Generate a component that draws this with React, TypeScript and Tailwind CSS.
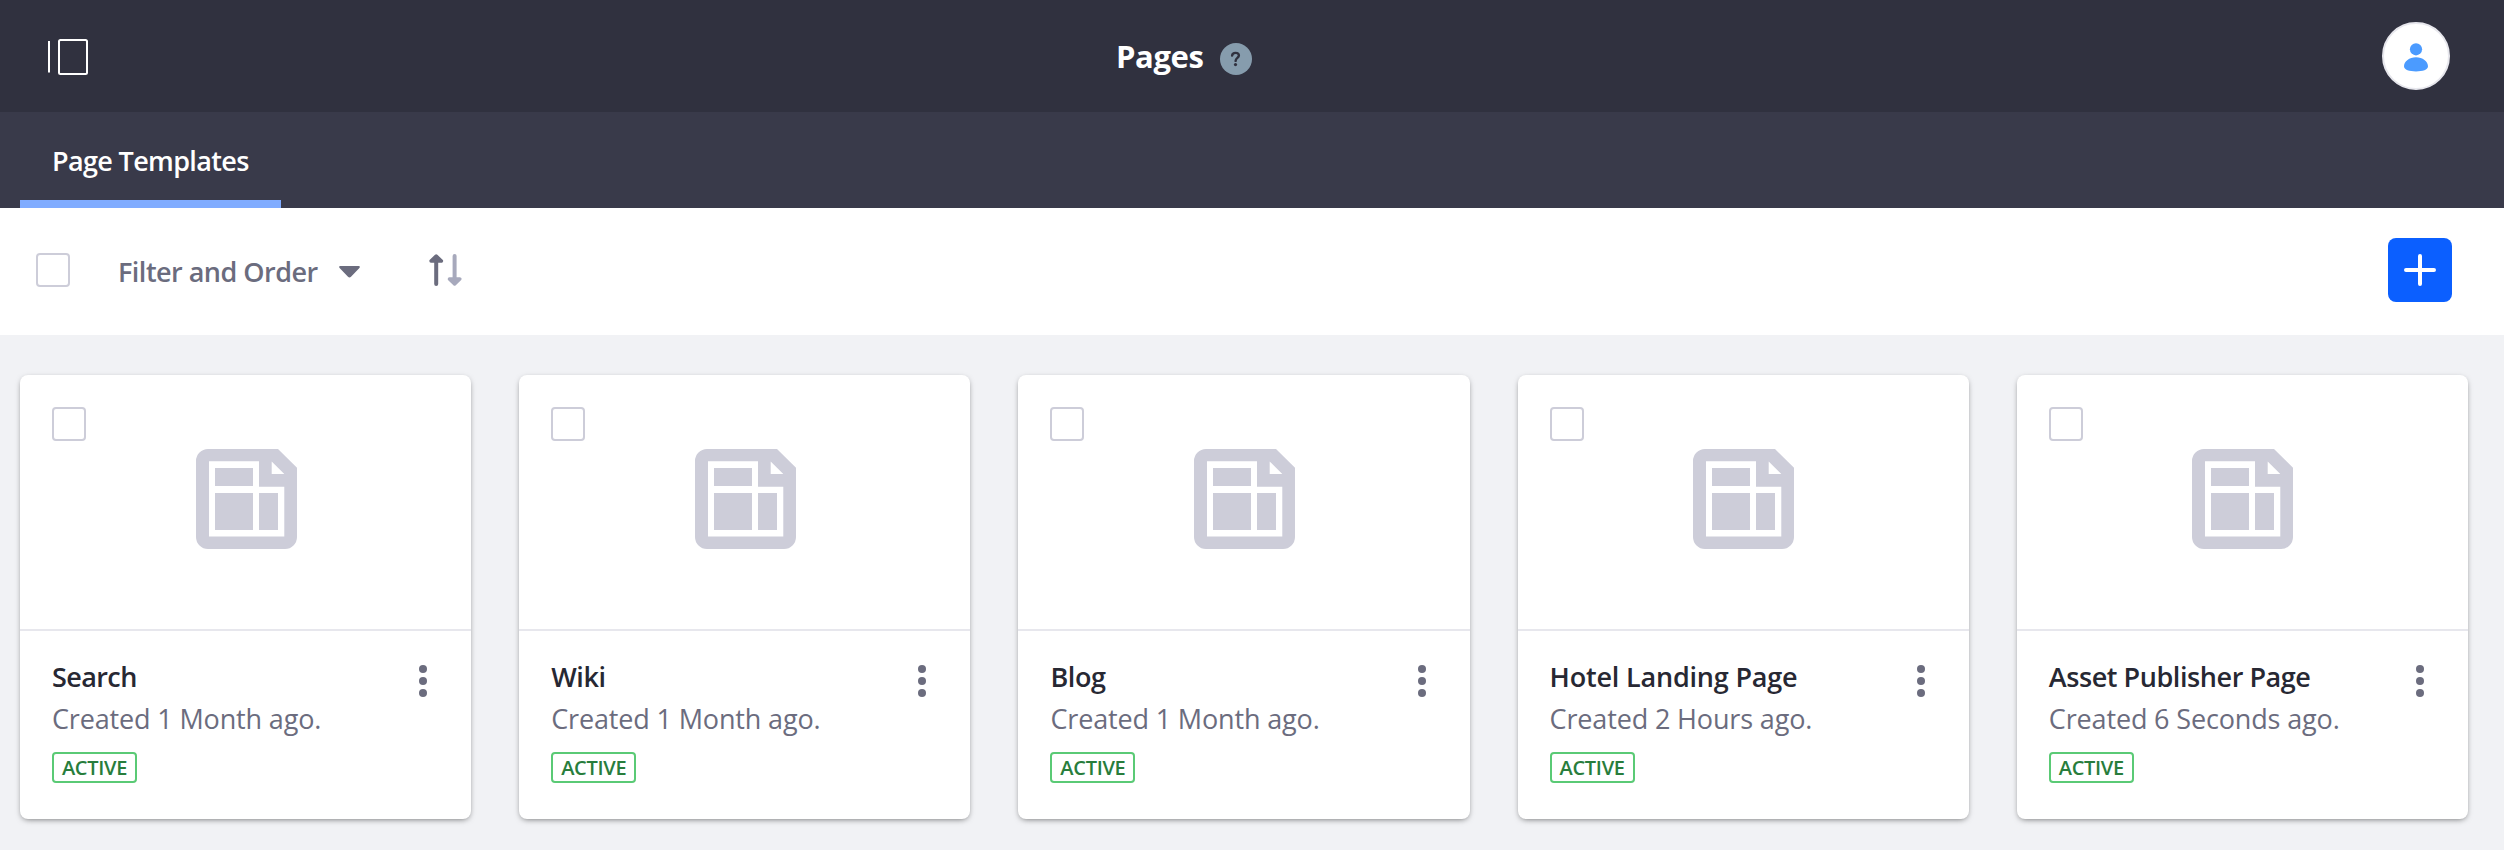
type Template = { title: string; created: string; titleTracking: string };

const templates: Template[] = [
  { title: "Search", created: "Created 1 Month ago.", titleTracking: "tracking-[-0.6px]" },
  { title: "Wiki", created: "Created 1 Month ago.", titleTracking: "tracking-[-0.4px]" },
  { title: "Blog", created: "Created 1 Month ago.", titleTracking: "tracking-[-0.4px]" },
  { title: "Hotel Landing Page", created: "Created 2 Hours ago.", titleTracking: "tracking-[-0.19px]" },
  { title: "Asset Publisher Page", created: "Created 6 Seconds ago.", titleTracking: "tracking-[-0.43px]" },
];

function Checkbox() {
  return <span className="block size-[34px] shrink-0 rounded border-2 border-[#cdcdd9] bg-white" />;
}

function PanelIcon() {
  return (
    <svg width="40" height="36" viewBox="0 0 40 36" fill="none" stroke="#fff" strokeWidth="2">
      <path d="M1 2v31.5" />
      <rect x="11" y="1" width="28" height="34" rx="1.5" />
    </svg>
  );
}

function HelpIcon() {
  return (
    <svg width="32" height="32" viewBox="0 0 32 32">
      <circle cx="16" cy="16" r="16" fill="#869cad" />
      <path d="M12.1 12.6C12.3 10.9 13.6 9.9 15.5 9.9c2 0 3.4 1 3.4 2.6 0 2.3-3.3 2.5-3.3 5.4" fill="none" stroke="#30313f" strokeWidth="2.4" strokeLinecap="round" strokeLinejoin="round" />
      <circle cx="15.5" cy="21.6" r="1.6" fill="#30313f" />
    </svg>
  );
}

function UserIcon() {
  return (
    <svg width="24" height="30" viewBox="0 0 24 30" fill="#4b9bff">
      <circle cx="12" cy="6.3" r="6.1" />
      <path d="M12 14.3c6.6 0 12 4 12 9 0 3.400-5.400 5.200-12 5.200S0 26.700 0 23.300c0-5 5.400-9 12-9z" />
    </svg>
  );
}

function SortIcon() {
  return (
    <svg width="33" height="32" viewBox="0 0 33 32" fill="none" strokeWidth="4" strokeLinecap="round" strokeLinejoin="round">
      <g stroke="#6b6c7e">
        <path d="M7.200 4v26" />
        <path d="M2 7L7.200 2l5.200 5z" fill="#6b6c7e" strokeWidth="3.400" />
      </g>
      <g stroke="#a7a9bc">
        <path d="M25.600 2v26" />
        <path d="M20.400 25l5.200 5 5.200-5z" fill="#a7a9bc" strokeWidth="3.400" />
      </g>
    </svg>
  );
}

function PageTemplateIcon() {
  return (
    <svg width="101" height="100" viewBox="0 0 101 100" fill="#cdcdd9">
      <path
        fillRule="evenodd"
        d="M12 0H82L101 18.700V88a12 12 0 0 1-12 12H12a12 12 0 0 1-12-12V12A12 12 0 0 1 12 0zM13 12.300V87.500H88.300V37.700H63V12.300zM75.700 12.500V25H88.300z"
      />
      <path d="M19 19h38v18H19zM19 44h38v37H19zM63 44h19v37H63z" />
    </svg>
  );
}

function MoreIcon() {
  return (
    <svg width="8" height="32" viewBox="0 0 8 32" fill="#6b6c7e">
      <circle cx="4" cy="4" r="4" />
      <circle cx="4" cy="16" r="4" />
      <circle cx="4" cy="28" r="4" />
    </svg>
  );
}

function TemplateCard({ title, created, titleTracking }: Template) {
  return (
    <article className="h-[444px] rounded-lg bg-white shadow-[0_2px_6px_-2px_rgba(0,0,0,0.6)]">
      <div className="relative flex h-[256px] items-center justify-center border-b-2 border-[#e7e7ed]">
        <div className="absolute left-8 top-8">
          <Checkbox />
        </div>
        <div className="pb-1.5 pl-px">
          <PageTemplateIcon />
        </div>
      </div>
      <div className="flex justify-between pl-8 pr-11 pt-6">
        <div className="text-[27px]">
          <h2 className={`leading-[43px] font-semibold text-[#272833] ${titleTracking}`}>{title}</h2>
          <p className="leading-[41px] tracking-[-0.15px] text-[#6b6c7e]">{created}</p>
          <span className="mt-[13px] flex h-[31px] w-[85px] items-center justify-center rounded border-2 border-[#5aca75] text-[20px] leading-[27px] font-semibold tracking-[-0.3px] text-[#287d3c]">
            ACTIVE
          </span>
        </div>
        <button className="mt-[10px] h-8">
          <MoreIcon />
        </button>
      </div>
    </article>
  );
}

export default function App() {
  return (
    <div className="min-h-[850px] bg-[#f1f2f5] font-['Open_Sans','Noto_Sans',sans-serif]">
      <header className="flex h-28 items-center bg-[#30313f] pl-12 pr-[54px]">
        <button className="mt-0.5">
          <PanelIcon />
        </button>
        <div className="ml-[1028px] flex items-center">
          <h1 className="w-[104px] text-[31px] leading-[42px] font-bold tracking-[-0.4px] text-white">Pages</h1>
          <span className="mt-[6px]">
            <HelpIcon />
          </span>
        </div>
        <button className="ml-auto flex size-[68px] items-center justify-center rounded-full border-2 border-[#e7e7ed] bg-white pt-1">
          <UserIcon />
        </button>
      </header>
      <nav className="flex h-24 bg-[#393a4a] pl-5">
        <a className="flex w-[261px] items-center border-b-8 border-[#80acff] pl-8 pt-[9px] text-[27px] leading-[41px] font-semibold tracking-[-0.65px] whitespace-nowrap text-white">
          Page Templates
        </a>
      </nav>
      <div className="flex h-[127px] items-start bg-white pl-9 pr-[52px] pt-[30px]">
        <div className="flex h-16 items-center">
          <Checkbox />
          <button className="ml-12 flex items-center text-[27px] leading-[41px] font-semibold tracking-[-0.52px] text-[#6b6c7e]">
            <span className="w-[221px] pt-[3px] text-left">Filter and Order</span>
            <svg width="21" height="12" viewBox="0 0 21 12" className="mt-1" fill="#6b6c7e">
              <path d="M1.500 0h18c1.300 0 1.700 1 .9 1.900L12 10.800c-.9 1-2.100 1-3 0L.6 1.900C-.2 1 .2 0 1.500 0z" />
            </svg>
          </button>
          <button className="ml-[69px]">
            <SortIcon />
          </button>
        </div>
        <button className="ml-auto flex size-16 items-center justify-center rounded-lg bg-[#0b5fff]">
          <svg width="32" height="32" viewBox="0 0 32 32" stroke="#fff" strokeWidth="4" strokeLinecap="round">
            <path d="M2 16h28M16 2v28" />
          </svg>
        </button>
      </div>
      <main className="grid grid-cols-5 gap-12 pl-5 pr-9 pt-10">
        {templates.map((t) => (
          <TemplateCard key={t.title} {...t} />
        ))}
      </main>
    </div>
  );
}
